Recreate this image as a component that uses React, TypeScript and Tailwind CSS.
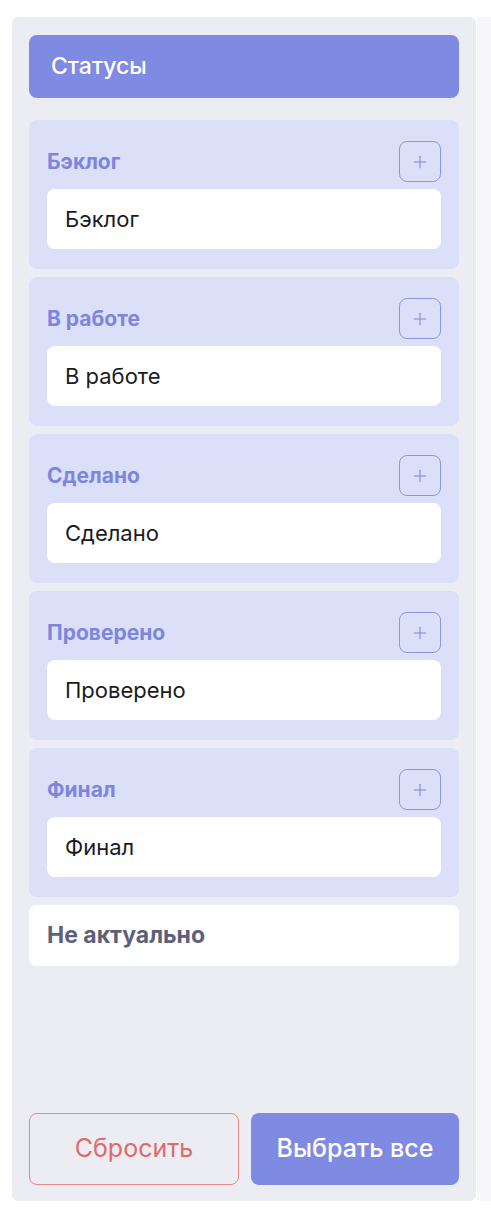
import { Plus } from "lucide-react";

const statuses = ["Бэклог", "В работе", "Сделано", "Проверено", "Финал"];

function StatusGroup({ title }: { title: string }) {
    return (
        <div className="rounded-lg bg-[#dcdff8] px-[18px] pt-[21px] pb-5">
            <div className="flex items-center justify-between">
                <span className="text-[21px] font-bold text-[#7c86dc]">{title}</span>
                <button className="w-[42px] h-[41px] rounded-lg border border-[#8e96e3] flex items-center justify-center text-[#7c86dc]">
                    <Plus className="w-5 h-5" strokeWidth={1.25} />
                </button>
            </div>
            <div className="mt-[7px] h-[60px] rounded-lg bg-white flex items-center px-[18px] text-[22px] text-[#1b1b1f]">
                {title}
            </div>
        </div>
    );
}

export default function App() {
    return (
        <div className="w-[491px] h-[1215px] bg-white flex font-['Inter',sans-serif]">
            <div className="ml-3 mt-[17px] w-[464px] h-[1184px] rounded-md bg-[#ecedf3] flex flex-col px-[17px] pt-[18px] pb-4">
                <div className="h-[63px] rounded-lg bg-[#7f8ae3] flex items-center px-[22px] text-[23px] font-medium text-white">
                    Статусы
                </div>
                <div className="mt-[22px] flex flex-col gap-2">
                    {statuses.map((s) => (
                        <StatusGroup key={s} title={s} />
                    ))}
                    <div className="h-[61px] rounded-lg bg-white flex items-center px-[18px] text-[23px] font-bold text-[#5d6078]">
                        Не актуально
                    </div>
                </div>
                <div className="mt-auto flex gap-3">
                    <button className="flex-1 h-[72px] rounded-lg border border-[#e88a8a] text-[25px] text-[#e06a6a]">
                        Сбросить
                    </button>
                    <button className="flex-1 h-[72px] rounded-lg bg-[#7f8ae3] text-[25px] font-medium text-white">
                        Выбрать все
                    </button>
                </div>
            </div>
            <div className="ml-auto mt-[17px] w-[14px] h-[1184px] bg-[#f7f7f9]" />
        </div>
    );
}
